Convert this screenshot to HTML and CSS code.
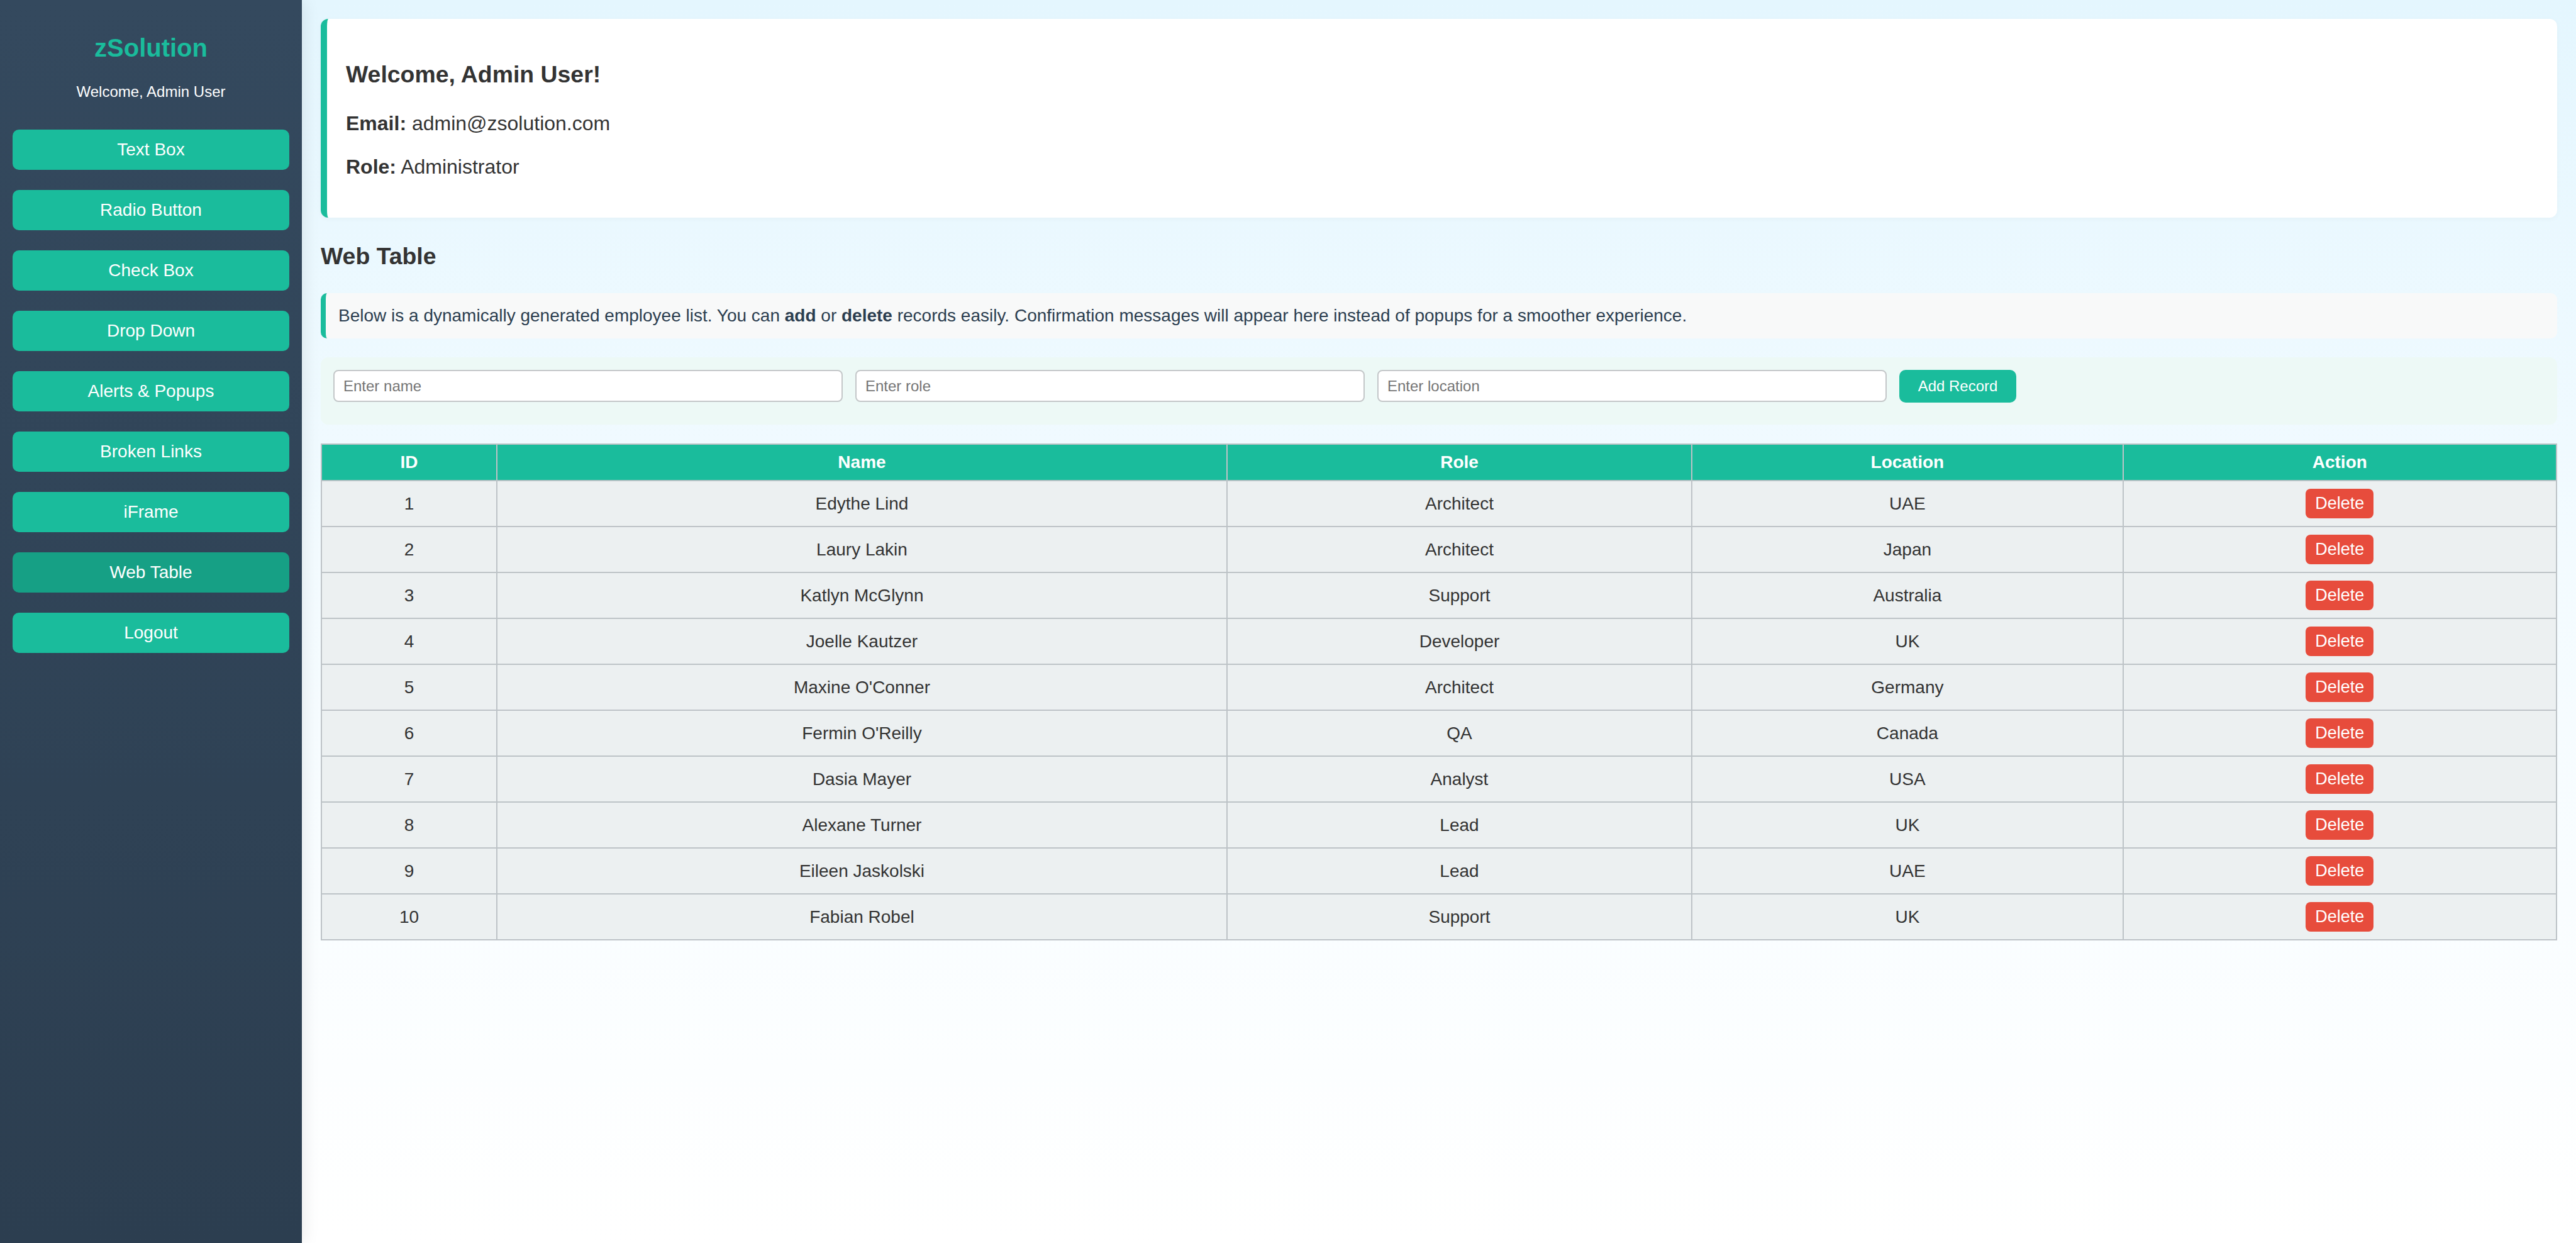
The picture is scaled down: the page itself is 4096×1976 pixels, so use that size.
FILE: index.html
```html
<!DOCTYPE html>
<html lang="en">
<head>
<meta charset="utf-8">
<title>zSolution - Web Table</title>
<link rel="stylesheet" href="styles.css">
</head>
<body>
<div class="layout">
  <aside class="sidebar">
    <h2 class="brand">zSolution</h2>
    <p class="welcome">Welcome, Admin User</p>
    <nav class="nav">
      <a class="nav-btn">Text Box</a>
      <a class="nav-btn">Radio Button</a>
      <a class="nav-btn">Check Box</a>
      <a class="nav-btn">Drop Down</a>
      <a class="nav-btn">Alerts &amp; Popups</a>
      <a class="nav-btn">Broken Links</a>
      <a class="nav-btn">iFrame</a>
      <a class="nav-btn active">Web Table</a>
      <a class="nav-btn">Logout</a>
    </nav>
  </aside>
  <main class="main">
    <section class="user-card">
      <h3>Welcome, Admin User!</h3>
      <p><strong>Email:</strong> admin@zsolution.com</p>
      <p><strong>Role:</strong> Administrator</p>
    </section>
    <h3 class="section-title">Web Table</h3>
    <div class="info">Below is a dynamically generated employee list. You can <strong>add</strong> or <strong>delete</strong> records easily. Confirmation messages will appear here instead of popups for a smoother experience.</div>
    <div class="form-panel">
      <input class="field" type="text" placeholder="Enter name">
      <input class="field" type="text" placeholder="Enter role">
      <input class="field" type="text" placeholder="Enter location">
      <button class="add-btn">Add Record</button>
    </div>
    <table class="data-table">
      <colgroup>
        <col class="c-id"><col class="c-name"><col class="c-role"><col class="c-loc"><col class="c-act">
      </colgroup>
      <thead>
        <tr><th>ID</th><th>Name</th><th>Role</th><th>Location</th><th>Action</th></tr>
      </thead>
      <tbody>
        <tr><td>1</td><td>Edythe Lind</td><td>Architect</td><td>UAE</td><td><button class="del-btn">Delete</button></td></tr>
        <tr><td>2</td><td>Laury Lakin</td><td>Architect</td><td>Japan</td><td><button class="del-btn">Delete</button></td></tr>
        <tr><td>3</td><td>Katlyn McGlynn</td><td>Support</td><td>Australia</td><td><button class="del-btn">Delete</button></td></tr>
        <tr><td>4</td><td>Joelle Kautzer</td><td>Developer</td><td>UK</td><td><button class="del-btn">Delete</button></td></tr>
        <tr><td>5</td><td>Maxine O'Conner</td><td>Architect</td><td>Germany</td><td><button class="del-btn">Delete</button></td></tr>
        <tr><td>6</td><td>Fermin O'Reilly</td><td>QA</td><td>Canada</td><td><button class="del-btn">Delete</button></td></tr>
        <tr><td>7</td><td>Dasia Mayer</td><td>Analyst</td><td>USA</td><td><button class="del-btn">Delete</button></td></tr>
        <tr><td>8</td><td>Alexane Turner</td><td>Lead</td><td>UK</td><td><button class="del-btn">Delete</button></td></tr>
        <tr><td>9</td><td>Eileen Jaskolski</td><td>Lead</td><td>UAE</td><td><button class="del-btn">Delete</button></td></tr>
        <tr><td>10</td><td>Fabian Robel</td><td>Support</td><td>UK</td><td><button class="del-btn">Delete</button></td></tr>
      </tbody>
    </table>
  </main>
</div>
</body>
</html>
```
FILE: styles.css
```css
* { box-sizing: border-box; }

html, body {
  margin: 0;
  padding: 0;
  height: 100%;
}

body {
  font-family: "Liberation Sans", Arial, sans-serif;
  font-size: 32px;
  color: #333;
}

.layout {
  display: flex;
  min-height: 100vh;
}

.sidebar {
  flex: 0 0 480px;
  width: 480px;
  background: linear-gradient(180deg, #34495e 0%, #2c3e50 100%);
  padding: 20px;
  text-align: center;
  color: #fff;
  box-shadow: 4px 0 24px rgba(0, 0, 0, 0.08);
  position: relative;
  z-index: 1;
}

.brand {
  margin: 33px 0 0;
  font-size: 40px;
  font-weight: bold;
  color: #1abc9c;
  line-height: 46px;
}

.welcome {
  margin: 33px 0 0;
  font-size: 24px;
  line-height: 27.6px;
}

.nav {
  display: flex;
  flex-direction: column;
  gap: 32px;
  margin-top: 46px;
}

.nav-btn {
  display: flex;
  align-items: center;
  justify-content: center;
  height: 64px;
  background: #1abc9c;
  color: #fff;
  font-size: 28px;
  border-radius: 10px;
  text-decoration: none;
}

.nav-btn.active {
  background: #16a085;
}

.main {
  flex: 1;
  padding: 30px;
  background: linear-gradient(180deg, #e4f6fe 0%, #f3fbff 45%, #ffffff 100%);
}

.user-card {
  background: #fff;
  border-left: 10px solid #1abc9c;
  border-radius: 12px;
  padding: 30px;
  margin-bottom: 40px;
  box-shadow: 0 2px 10px rgba(0, 0, 0, 0.03);
}

.user-card h3,
.section-title {
  font-size: 37.4px;
  margin: 37.4px 0;
  color: #333;
}

.user-card p {
  margin: 32px 0;
}

.section-title {
  margin-top: 0;
}

.info {
  background: #f8f9f9;
  border-left: 8px solid #1abc9c;
  border-radius: 10px;
  padding: 20px;
  font-size: 28px;
  line-height: 32px;
  color: #2c3e50;
  margin-bottom: 30px;
}

.form-panel {
  display: flex;
  align-items: stretch;
  gap: 20px;
  background: #edf9f6;
  border-radius: 12px;
  padding: 20px 20px 35px;
  margin-bottom: 30px;
}

.field {
  flex: 0 0 810px;
  height: 51px;
  padding: 10px 14px;
  border: 2px solid #c4c7c9;
  border-radius: 8px;
  background: #fff;
  font-family: "Liberation Sans", Arial, sans-serif;
  font-size: 24px;
  color: #333;
}

.field::placeholder {
  color: #757575;
}

.add-btn {
  flex: 0 0 186px;
  height: 52px;
  background: #1abc9c;
  color: #fff;
  border: none;
  border-radius: 10px;
  font-family: "Liberation Sans", Arial, sans-serif;
  font-size: 24px;
}

.data-table {
  width: 100%;
  border-collapse: collapse;
  table-layout: fixed;
  font-size: 28px;
}

.c-id { width: 279px; }
.c-name { width: 1160px; }
.c-role { width: 739px; }
.c-loc { width: 685px; }
.c-act { width: 689px; }

.data-table th,
.data-table td {
  border: 2px solid #bdc3c7;
  padding: 12px;
  text-align: center;
  line-height: 32px;
}

.data-table th {
  background: #1abc9c;
  color: #fff;
  font-weight: bold;
}

.data-table td {
  background: #ecf0f1;
  color: #333;
}

.del-btn {
  background: #e74c3c;
  color: #fff;
  border: none;
  border-radius: 8px;
  padding: 8px 15px;
  font-family: "Liberation Sans", Arial, sans-serif;
  font-size: 27px;
  line-height: 31px;
  vertical-align: middle;
}
```
